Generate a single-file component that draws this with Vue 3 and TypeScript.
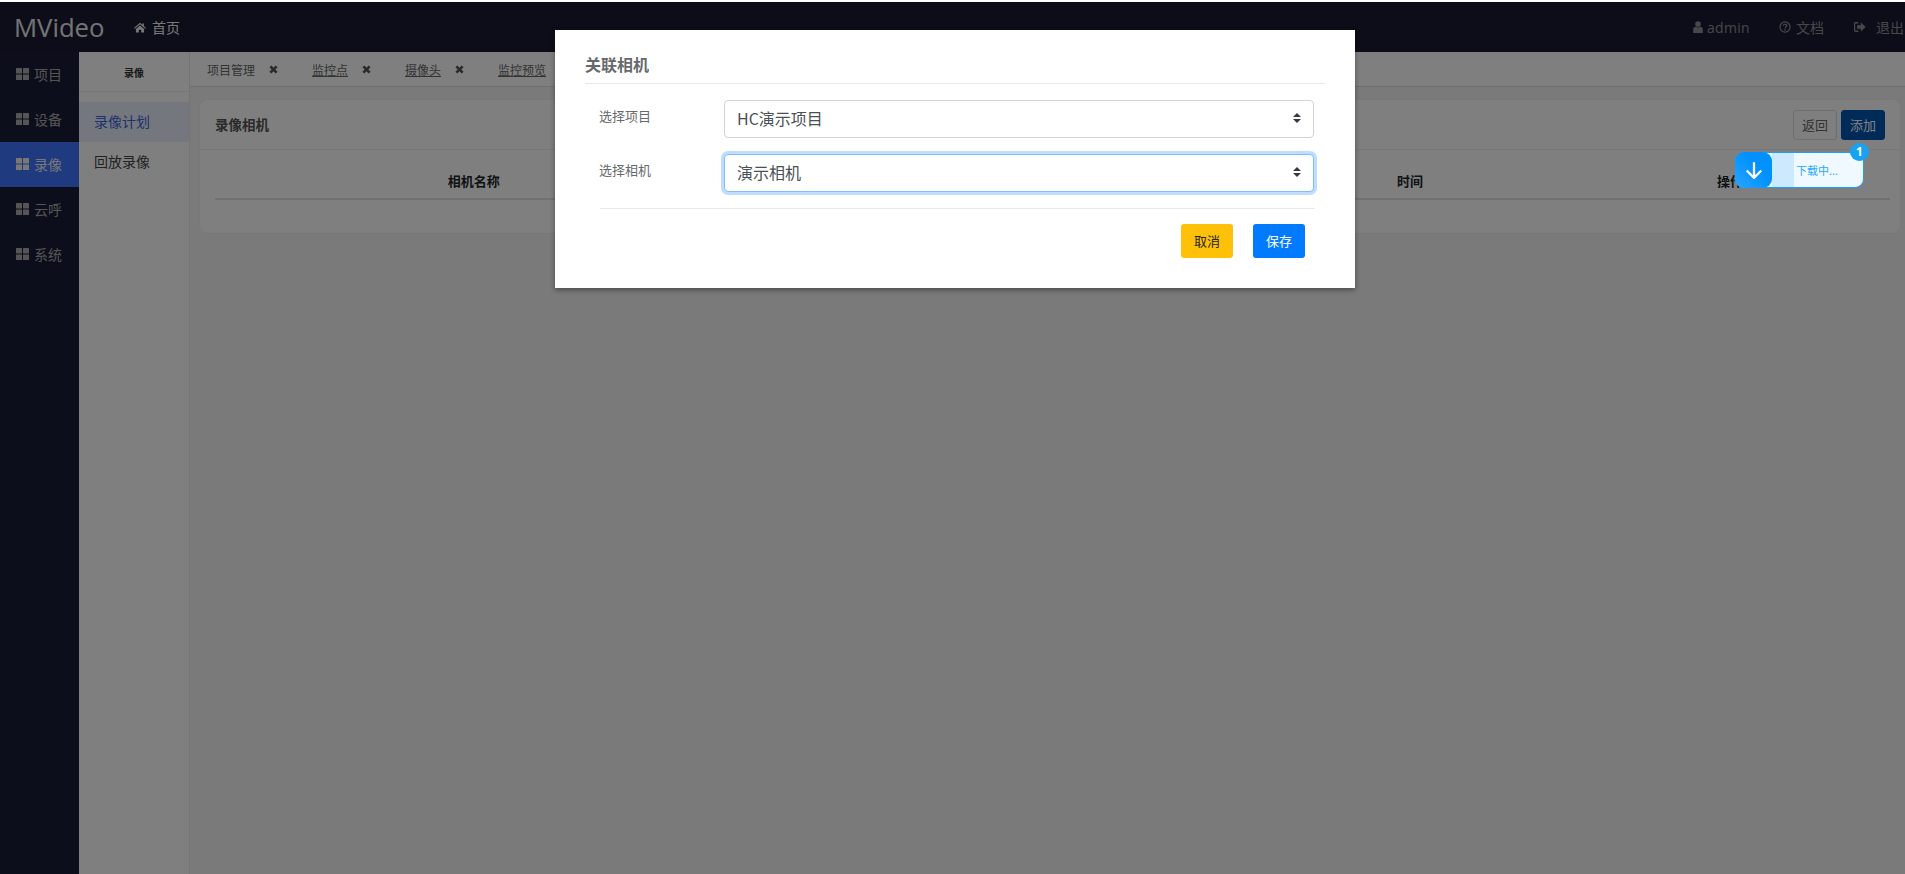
<template>
  <div class="page">
    <header class="topbar">
      <span class="brand">MVideo</span>
      <a class="home">
        <svg class="ic-home" viewBox="0 0 16 14"><path d="M8 0.6 L11.2 3.4 V1.6 H13.2 V5.2 L16 7.7 L15 8.8 L8 2.8 L1 8.8 L0 7.7 Z M2.6 9 L8 4.4 L13.4 9 V13.6 H9.6 V10 H6.4 V13.6 H2.6 Z" /></svg>
        首页
      </a>
      <div class="top-right">
        <span class="top-item admin">
          <svg class="ic" viewBox="0 0 12 14"><circle cx="6" cy="3.6" r="3.3" /><path d="M0.4 14 V10.2 C0.4 8.2 1.6 7 3 6.8 C4.6 8 7.4 8 9 6.8 C10.4 7 11.6 8.2 11.6 10.2 V14 Z" /></svg>
          admin
        </span>
        <span class="top-item doc">
          <svg class="ic" viewBox="0 0 14 14"><circle cx="7" cy="7" r="5.9" fill="none" stroke="currentColor" stroke-width="1.4" /><path d="M5 5.5 C5 3.2 9 3.2 9 5.4 C9 6.9 7 6.8 7 8.6" fill="none" stroke="currentColor" stroke-width="1.4" /><rect x="6.2" y="9.5" width="1.6" height="1.6" /></svg>
          文档
        </span>
        <span class="top-item logout">
          <svg class="ic" viewBox="0 0 14 12"><path d="M5 1 H2 C1 1 0.6 1.6 0.6 2.4 V9.6 C0.6 10.4 1 11 2 11 H5" fill="none" stroke="currentColor" stroke-width="1.6" /><path d="M8 0.8 L13.6 6 L8 11.2 V8 H3.6 V4 H8 Z" /></svg>
          退出
        </span>
      </div>
    </header>

    <div class="body">
      <aside class="sidebar">
        <a v-for="item in menus" :key="item" class="menu" :class="{ active: item === '录像' }">
          <svg class="ic-grid" viewBox="0 0 13 12">
            <rect x="0" y="0" width="6" height="5.4" rx="0.5" />
            <rect x="7" y="0" width="6" height="5.4" rx="0.5" />
            <rect x="0" y="6.6" width="6" height="5.4" rx="0.5" />
            <rect x="7" y="6.6" width="6" height="5.4" rx="0.5" />
          </svg>
          {{ item }}
        </a>
      </aside>

      <nav class="subnav">
        <div class="sub-title">录像</div>
        <ul class="sub-list">
          <li v-for="item in subMenus" :key="item" :class="{ active: item === '录像计划' }">{{ item }}</li>
        </ul>
      </nav>

      <main class="content">
        <div class="tabs">
          <span v-for="tab in tabs" :key="tab" class="tab">
            {{ tab }}
            <svg class="ic-close" viewBox="0 0 10 10"><path d="M1.5 1.5 L8.5 8.5 M8.5 1.5 L1.5 8.5" /></svg>
          </span>
        </div>

        <section class="card">
          <div class="card-head">
            <span class="card-title">录像相机</span>
            <div class="card-actions">
              <button class="btn-back">返回</button>
              <button class="btn-add">添加</button>
            </div>
          </div>
          <div class="table-wrap">
            <div class="table-head">
              <span>相机名称</span>
              <span></span>
              <span>时间</span>
              <span>操作</span>
            </div>
          </div>
        </section>
      </main>
    </div>

    <div class="mask">
      <div class="modal">
        <h5 class="modal-title">关联相机</h5>
        <div class="form">
          <div class="form-row">
            <label>选择项目</label>
            <div class="select">
              HC演示项目
              <svg class="caret" viewBox="0 0 8 10"><path d="M4 0 L8 4 H0 Z M0 6 H8 L4 10 Z" /></svg>
            </div>
          </div>
          <div class="form-row">
            <label>选择相机</label>
            <div class="select focused">
              演示相机
              <svg class="caret" viewBox="0 0 8 10"><path d="M4 0 L8 4 H0 Z M0 6 H8 L4 10 Z" /></svg>
            </div>
          </div>
        </div>
        <div class="modal-foot">
          <button class="btn-cancel">取消</button>
          <button class="btn-save">保存</button>
        </div>
      </div>

      <div class="download">
        <div class="dl-icon">
          <svg viewBox="0 0 16 16"><path d="M8 1 V15 M1.5 8.5 L8 15 L14.5 8.5" /></svg>
        </div>
        <div class="dl-progress"></div>
        <span class="dl-text">下载中...</span>
        <span class="dl-badge">1</span>
      </div>
    </div>
  </div>
</template>

<script setup lang="ts">
const menus = ['项目', '设备', '录像', '云呼', '系统']
const subMenus = ['录像计划', '回放录像']
const tabs = ['项目管理', '监控点', '摄像头', '监控预览']
</script>

<style>
html,
body {
  margin: 0;
  height: 100%;
  overflow: hidden;
  background: #fff;
}
</style>

<style scoped>
.page {
  position: relative;
  height: 874px;
  padding-top: 2px;
  box-sizing: border-box;
  display: flex;
  flex-direction: column;
  font-family: "Noto Sans CJK SC", "Noto Sans", sans-serif;
  color: #333;
  overflow: hidden;
}

.topbar {
  height: 50px;
  flex: none;
  display: flex;
  align-items: center;
  background: #191b30;
  color: #ccc;
}

.brand {
  font-family: "Open Sans", "Noto Sans", sans-serif;
  font-size: 25.7px;
  margin-left: 14px;
  width: 120px;
  color: #fff;
  opacity: 0.9;
}

.home {
  display: flex;
  align-items: center;
  gap: 6px;
  font-size: 14px;
  color: #f0f0f0;
}

.ic-home {
  width: 12px;
  height: 11px;
  fill: currentColor;
}

.top-right {
  margin-left: auto;
  display: flex;
  align-items: center;
  font-size: 14px;
  color: #8f8f99;
  width: 213px;
  flex: none;
}

.top-item {
  display: flex;
  align-items: center;
  white-space: nowrap;
}

.ic {
  width: 12px;
  height: 12px;
  fill: currentColor;
  flex: none;
}

.admin {
  gap: 3px;
  width: 87px;
  font-family: "Open Sans", "Noto Sans CJK SC", sans-serif;
  letter-spacing: 0.3px;
}

.doc {
  gap: 5px;
  width: 75px;
}

.logout {
  gap: 10px;
}

.body {
  flex: 1;
  display: flex;
  min-height: 0;
}

.sidebar {
  width: 79px;
  flex: none;
  background: #181e36;
}

.menu {
  height: 45px;
  display: flex;
  align-items: center;
  gap: 5px;
  padding: 0 0 2px 16px;
  box-sizing: border-box;
  font-size: 14px;
  color: #aaa;
}

.menu.active {
  background: #3e74ff;
  color: #f0f0f0;
}

.ic-grid {
  width: 13px;
  height: 12px;
  fill: currentColor;
}

.subnav {
  width: 110px;
  flex: none;
  background: #fff;
  border-right: 1px solid #e8e8e8;
}

.sub-title {
  height: 39px;
  line-height: 41px;
  text-align: center;
  font-size: 10px;
  font-weight: 700;
  color: #333;
  border-bottom: 1px solid #f0f0f0;
  margin-bottom: 10px;
}

.sub-list {
  list-style: none;
  margin: 0;
  padding: 0;
}

.sub-list li {
  height: 40px;
  line-height: 38px;
  padding-left: 15px;
  font-size: 14px;
  color: #444;
}

.sub-list li.active {
  background: #e8eefc;
  color: #3b63d8;
}

.content {
  flex: 1;
  min-width: 0;
  background: #f4f4f4;
}

.tabs {
  height: 35px;
  display: flex;
  align-items: center;
  padding-left: 17px;
  background: #fff;
  border-bottom: 1px solid #e0e0e0;
  box-sizing: border-box;
  font-size: 12px;
  color: #666;
}

.tab {
  display: flex;
  align-items: center;
  gap: 14px;
  margin-right: 34px;
}

.tab:nth-child(n + 2) {
  text-decoration: underline;
}

.ic-close {
  width: 9px;
  height: 9px;
  fill: none;
  stroke: #555;
  stroke-width: 3;
}

.card {
  margin: 13px 5px 0 10px;
  height: 133px;
  background: #fff;
  border-radius: 8px;
  box-sizing: border-box;
  box-shadow: 0 0 2px rgba(0, 0, 0, 0.05);
}

.card-head {
  height: 50px;
  display: flex;
  align-items: center;
  justify-content: space-between;
  padding: 0 15px;
  border-bottom: 1px solid #eee;
  box-sizing: border-box;
}

.card-title {
  font-size: 13.5px;
  font-weight: 700;
  color: #555;
  margin-top: -2px;
}

.card-actions {
  display: flex;
  gap: 4px;
}

.card-actions button {
  width: 44px;
  height: 30px;
  padding: 0;
  border-radius: 3px;
  font-family: inherit;
  font-size: 13px;
}

.btn-back {
  background: #fff;
  border: 1px solid #ddd;
  color: #666;
}

.btn-add {
  background: #0056b3;
  border: 1px solid #0056b3;
  color: #fff;
}

.table-wrap {
  padding: 0 10px 0 15px;
}

.table-head {
  height: 50px;
  padding-top: 12px;
  box-sizing: border-box;
  display: grid;
  grid-template-columns: 1fr 1fr 320px 320px;
  align-items: center;
  text-align: center;
  font-size: 13px;
  font-weight: 700;
  color: #212529;
  border-bottom: 2px solid #dee2e6;
}

.mask {
  position: absolute;
  top: 2px;
  left: 0;
  right: 0;
  bottom: 0;
  background: rgba(0, 0, 0, 0.5);
  display: flex;
  justify-content: center;
  align-items: flex-start;
}

.modal {
  width: 800px;
  height: 258px;
  margin-top: 28px;
  margin-left: 5px;
  padding: 0 30px;
  box-sizing: border-box;
  background: #fff;
  box-shadow: 0 2px 5px rgba(0, 0, 0, 0.4);
}

.modal-title {
  margin: 0;
  height: 54px;
  line-height: 68px;
  font-size: 16px;
  font-weight: 700;
  color: #676a6c;
  border-bottom: 1px solid #e4e7ed;
  box-sizing: border-box;
}

.form {
  padding: 16px 11px 0 14px;
}

.form-row {
  display: flex;
  align-items: flex-start;
  margin-bottom: 16px;
}

.form-row label {
  width: 125px;
  flex: none;
  font-size: 13px;
  line-height: 32px;
  color: #676a6c;
}

.select {
  flex: 1;
  height: 38px;
  display: flex;
  align-items: center;
  justify-content: space-between;
  padding: 0 12px 2px;
  box-sizing: border-box;
  border: 1px solid #ced4da;
  border-radius: 4px;
  font-size: 16px;
  color: #495057;
  background: #fff;
}

.select.focused {
  border-color: #80bdff;
  box-shadow: 0 0 0 3px rgba(0, 123, 255, 0.25);
}

.caret {
  width: 8px;
  height: 10px;
  fill: #343a40;
}

.modal-foot {
  margin: 0 10px 0 15px;
  padding: 15px 10px 0 0;
  display: flex;
  justify-content: flex-end;
  gap: 20px;
  border-top: 1px solid #e7eaec;
}

.modal-foot button {
  width: 52px;
  height: 34px;
  padding: 0 0 2px;
  border: none;
  border-radius: 3px;
  font-family: inherit;
  font-size: 13px;
}

.btn-cancel {
  background: #ffc107;
  color: #212529;
}

.btn-save {
  background: #007bff;
  color: #fff;
}

.download {
  position: absolute;
  left: 1735px;
  top: 150px;
  width: 129px;
  height: 36px;
  box-sizing: border-box;
  display: flex;
  align-items: center;
  background: #f0f9ff;
  border: 1px solid #1a9fff;
  border-radius: 9px;
}

.dl-icon {
  width: 37px;
  height: 36px;
  margin: -1px 0 -1px -1px;
  flex: none;
  display: flex;
  align-items: center;
  justify-content: center;
  border-radius: 9px;
  background: linear-gradient(45deg, #2aa5ff, #0091ff 60%);
}

.dl-icon svg {
  width: 18px;
  height: 18px;
  fill: none;
  stroke: #fff;
  stroke-width: 2;
}

.dl-progress {
  width: 22px;
  height: 100%;
  flex: none;
  background: #cde9fd;
}

.dl-text {
  margin-left: 2px;
  font-size: 11px;
  color: #2aa8ff;
  white-space: nowrap;
}

.dl-badge {
  position: absolute;
  right: -6px;
  top: -10px;
  width: 19px;
  height: 18px;
  border-radius: 50%;
  background: #16a3f5;
  color: #fff;
  font-family: "Open Sans", sans-serif;
  font-weight: 700;
  font-size: 12px;
  line-height: 18px;
  text-align: center;
}
</style>
